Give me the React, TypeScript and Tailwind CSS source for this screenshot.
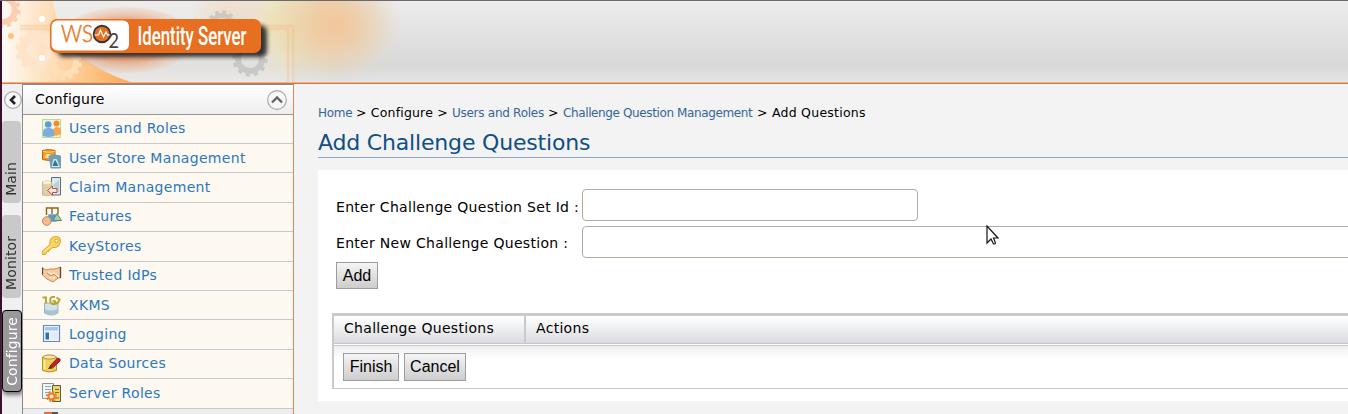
import React from "react";

const Gear = ({ x, y, r, color, hole }: { x: number; y: number; r: number; color: string; hole: number }) => (
  <g transform={`translate(${x} ${y})`} stroke={color} fill="none">
    <circle r={(r + hole) / 2} strokeWidth={r - hole} />
    <circle r={r + 1} strokeWidth="3.4" strokeDasharray={`${((r + 1) * 6.2832) / 24} ${((r + 1) * 6.2832) / 24}`} />
  </g>
);

function Banner() {
  return (
    <svg className="block h-[81px] w-full" width="1348" height="81" viewBox="0 1 1348 81" preserveAspectRatio="xMinYMin slice">
      <defs>
        <linearGradient id="bg" x1="0" y1="0" x2="0" y2="1">
          <stop offset="0" stopColor="#ececec" />
          <stop offset=".8" stopColor="#d8d8d8" />
          <stop offset="1" stopColor="#e4e4e4" />
        </linearGradient>
        <linearGradient id="swoosh" x1="0" y1="0" x2="1" y2="0">
          <stop offset="0" stopColor="#fffaf4" />
          <stop offset=".35" stopColor="#fde0bd" />
          <stop offset="1" stopColor="#fda94f" />
        </linearGradient>
        <radialGradient id="halo">
          <stop offset="0" stopColor="#e06b30" stopOpacity=".85" />
          <stop offset=".65" stopColor="#e88957" stopOpacity=".6" />
          <stop offset="1" stopColor="#f0c8b0" stopOpacity=".3" />
        </radialGradient>
        <radialGradient id="peach">
          <stop offset="0" stopColor="#f2c69b" />
          <stop offset=".35" stopColor="#efcaa2" stopOpacity=".85" />
          <stop offset=".7" stopColor="#e9d4b8" stopOpacity=".6" />
          <stop offset="1" stopColor="#e4ddd2" stopOpacity="0" />
        </radialGradient>
        <radialGradient id="yellow">
          <stop offset="0" stopColor="#f2dfa0" />
          <stop offset=".4" stopColor="#efdfae" stopOpacity=".85" />
          <stop offset="1" stopColor="#ebe3d2" stopOpacity="0" />
        </radialGradient>
        <filter id="soft" x="-10%" y="-30%" width="120%" height="170%">
          <feGaussianBlur stdDeviation="2.2" />
        </filter>
      </defs>
      <rect y="1" width="1348" height="81" fill="url(#bg)" />
      <rect x="2" y="1" width="292" height="81" fill="#f4f1ec" opacity=".35" />
      <circle cx="298" cy="24" r="64" fill="url(#yellow)" />
      <ellipse cx="336" cy="25" rx="66" ry="60" fill="url(#peach)" />
      <circle cx="230" cy="12" r="42" fill="url(#peach)" opacity=".35" />
      <path d="M2 1H53Q61 60 131 82H2Z" fill="url(#swoosh)" />
      <ellipse cx="126" cy="40" rx="68" ry="33" fill="url(#halo)" />
      <Gear x={3} y={10} r={15} hole={9} color="#fbceb0" />
      <Gear x={36} y={50} r={18} hole={9} color="#fde4cb" />
      <Gear x={65} y={63} r={14} hole={8} color="#ffdfb8" />
      <Gear x={222} y={26} r={13} hole={8} color="#d0c8be" />
      <Gear x={250} y={59} r={15} hole={9} color="#c8c8c8" />
      <path d="M20 26H293V82M20 29H288V82" fill="none" stroke="#f3ba82" strokeWidth="2.5" opacity=".35" />
      <g fill="#fff"><circle cx="42" cy="19" r="3" /><circle cx="42" cy="58" r="3" /></g>
      <circle cx="11" cy="36" r="3" fill="#fdc37d" />
      <rect x="57" y="25" width="210" height="32" rx="7" fill="#222" opacity=".9" filter="url(#soft)" />
      <rect x="50" y="19" width="211" height="34" rx="7" fill="#e96f20" />
      <rect x="51.5" y="20.5" width="77.5" height="30" rx="6" fill="#fff" />
      <text x="61" y="42" fontFamily="Lato" fontWeight="300" fontSize="22.5" fill="#e87722" stroke="#e87722" strokeWidth=".5" textLength="32" lengthAdjust="spacingAndGlyphs">WS</text>
      <circle cx="102" cy="34" r="8.3" fill="#e96f20" stroke="#383435" strokeWidth="1.9" />
      <path d="M94.5 35h4l2-5 3 7 2.5-5 1.5 3h2.5" fill="none" stroke="#fff" strokeWidth="1.2" />
      <text x="108.5" y="47.5" fontFamily="Lato" fontWeight="400" fontSize="21" fill="#454142" textLength="10.5" lengthAdjust="spacingAndGlyphs">2</text>
      <text x="137.5" y="45" fontFamily="Roboto" fontWeight="500" fontSize="25" fill="#fff" textLength="109" lengthAdjust="spacingAndGlyphs">Identity Server</text>
    </svg>
  );
}

const icons: Record<string, React.ReactNode> = {
  users: (
    <>
      <path d="M.5 .5h18v18H.5z" fill="#edf5df" stroke="#b5dd8d" />
      <circle cx="6.2" cy="5.5" r="3.3" fill="#5b9bdc" /><circle cx="14.5" cy="4.5" r="3" fill="#f28c28" />
      <path d="M11 18V11q1-3 4-3t4 3v4q-3 2-8 2" fill="#f6a550" />
      <path d="M1 17v-4q0-4 5.5-4t5.5 4v4q-5 2-11 0" fill="#7facdf" />
    </>
  ),
  store: (
    <>
      <path d="M.5 1.500q6-2 12.500 0v9q-6 2-12.500 0z" fill="#f29a20" stroke="#bd6b18" /><path d="M1 2.500q6 1.500 11.500 0" stroke="#ffd88a" fill="none" />
      <path d="m2.500 9 1.500-4h4l1 4z" fill="#ffdf9b" />
      <path d="M7 7q6-2 11.500 0v12H9z" fill="#6d9fb7" stroke="#6d9fb7" /><path d="m9.500 18 2-8h3l3.500 8z" fill="#d9ebf2" /><path d="m10.500 17 2.500-6.500 3.500 6.500z" fill="#35768f" />
    </>
  ),
  claim: (
    <>
      <path d="M9.500 .5h9v17.500h-9z" fill="#dceaf0" stroke="#55727d" /><path d="m11 8 6-5v13z" fill="#bdced5" />
      <path d="M.5 5q5-2.500 9 0v13q-5 1.500-9 0z" fill="#ddd0a5" stroke="#c9bc92" /><ellipse cx="5" cy="5.500" rx="4" ry="1.800" fill="#f6efd2" />
      <path d="m5.500 13.500 5-4.500v2.500h4.500v4h-4.500V18z" fill="#f8e5de" stroke="#b64e43" />
    </>
  ),
  features: (
    <>
      <path d="M4.500 8V1h11.500v6M10 1v6" fill="none" stroke="#8b6420" strokeWidth="1.400" />
      <path d="M6.500 7.500h8v7h-8z" fill="#5b96cf" stroke="#87b5dd" /><path d="m11 13.500 4-7 4.500 7z" fill="#a5cf9f" stroke="#5c8971" />
      <circle cx="4.800" cy="14" r="4.300" fill="#f5bd8c" stroke="#b98862" />
    </>
  ),
  key: (
    <>
      <path d="M.5 15 8 8.500Q7 4 10 1.500q4-2.500 7.500 0 2.500 4-.5 8-3 3-6.500 2l-2 2H7v2H5l-1.500 3h-3z" fill="#fbd35c" stroke="#d8a735" />
      <circle cx="14.500" cy="4.800" r="1.700" fill="#fff9db" stroke="#cf9c31" /><path d="m3 15.500 6-6" stroke="#fff0a0" />
    </>
  ),
  trust: (
    <>
      <path d="M.5 2 4 4l4-1h5l5.500-2v11h-2.500l-5 4-6-3-4.500-4z" fill="#f3cda0" stroke="#c78851" />
      <path d="M.5 1.500v7M18.500 1v11" stroke="#673e36" strokeWidth="1.300" /><path d="m6 6 3 2 3-1 5 4M8 12l2-2M11 13l2-2" stroke="#fff0d9" fill="none" strokeWidth="1.200" /><path d="m5 7 4 3 3-2 4 4" stroke="#c08050" fill="none" />
    </>
  ),
  xkms: (
    <>
      <path d="M2.500 7h13.500v10q-6.500 4-13.500 0z" fill="#d3e1e9" stroke="#9bb4c2" /><path d="M3 13q6 3 12.500 0v4q-6 3-12.500 0z" fill="#a8c3d2" />
      <path d="M.5 1.500h3.500v6M13 1q-6-1-4.500 5 1 3 4 1.500 2-3-2-2.500m1 3q5 0 6-4.500l-3-2" fill="none" stroke="#b7a52b" strokeWidth="1.900" />
    </>
  ),
  log: (
    <>
      <path d="M1.500 1.500h16v16h-16z" fill="#eef6fc" stroke="#6688bb" strokeWidth="1.200" /><path d="M3 3h13v3.500H3z" fill="#9fc8f2" />
      <path d="M3.500 8.500H7v7H3.500z" fill="#2e70b4" /><path d="M8.500 8.500H16v7H8.500z" fill="#dfebf6" />
    </>
  ),
  data: (
    <>
      <path d="M.5 3q7-3.500 14 0v13.500q-7 3-14 0z" fill="#f3ce59" stroke="#b3912b" /><ellipse cx="7.500" cy="3" rx="6.500" ry="2" fill="#fae9b8" stroke="#b79332" />
      <path d="M2.500 6v9" stroke="#fff0a0" strokeWidth="1.500" /><path d="m8 12 7.500-8 2.500 1v2l-7.500 7z" fill="#c52027" stroke="#832329" /><path d="m6 15 2-3 2.500 2.500z" fill="#382e28" />
    </>
  ),
  roles: (
    <>
      <path d="M.5 .5h11v15H.5z" fill="#eff4f4" stroke="#829aa0" /><path d="M3 3.500h6M3 6.500h6M3 9.500h5" stroke="#8fa9ae" />
      <path d="M10.500 2.500h8v16h-8z" fill="#ead66d" stroke="#5f5d3e" /><path d="M13 6.500h4M13 9.500h4M13 15h4" stroke="#786e2e" />
      <circle cx="9.500" cy="13.500" r="3" fill="#fff0df" stroke="#f17920" strokeWidth="1.800" /><circle cx="9.500" cy="13.500" r="4.700" fill="none" stroke="#f17920" strokeWidth="1.800" strokeDasharray="2 1.690" />
    </>
  ),
};

const rows: [string, string, string][] = [
  ["Users and Roles", "users", "h-[29px] pb-px"],
  ["User Store Management", "store", "h-[29px] pt-px"],
  ["Claim Management", "claim", "h-[30px] pb-px"],
  ["Features", "features", "h-[29px] pb-px"],
  ["KeyStores", "key", "h-[30px] pb-px"],
  ["Trusted IdPs", "trust", "h-[29px] pb-px"],
  ["XKMS", "xkms", "h-[29px] pt-px"],
  ["Logging", "log", "h-[30px] pb-px"],
  ["Data Sources", "data", "h-[29px] pb-px"],
  ["Server Roles", "roles", "h-[30px] pb-px"],
];

const verticalText = "rotate-180 [writing-mode:vertical-rl] text-[14px] tracking-[.1px] leading-[16px] whitespace-nowrap";
const button = "border border-[#9d9d9d] bg-linear-to-b from-[#f5f5f5] to-[#cdcdcd] font-['Liberation_Sans',sans-serif] text-[16px] leading-none tracking-normal text-black";

export default function App() {
  return (
    <div className="flex h-[414px] w-full flex-col overflow-hidden bg-[#f3f3f3] font-['DejaVu_Sans',sans-serif] text-black">
      <div className="h-px shrink-0 bg-[#6d686b]" />
      <div className="h-[83px] shrink-0 border-l-2 border-[#3d0e2c]">
        <div className="h-[81px] overflow-hidden"><div className="-ml-0.5 w-[1348px]"><Banner /></div></div>
        <div className="h-px bg-[#e5b493]" />
        <div className="h-px bg-[#dc7639]" />
      </div>
      <div className="flex min-h-0 flex-1">
        <aside className="flex w-[22px] shrink-0 flex-col border-l-2 border-[#3d0e2c] bg-[#f0f0f0]">
          <div className="flex h-[37px] justify-center pt-[7px] pl-[2px]">
            <svg width="18" height="18" viewBox="0 0 18 18" className="shrink-0">
              <circle cx="9" cy="9" r="8.3" fill="#f7f7f7" stroke="#aaa" strokeWidth="1.2" /><path d="m11 5-4 4 4 4" fill="none" stroke="#222" strokeWidth="2.6" />
            </svg>
          </div>
          <div className="flex h-[82px] w-[19px] items-end justify-center rounded bg-[#c9c9c9] pr-px pb-[7px] text-[#333]"><span className={verticalText}>Main</span></div>
          <div className="mt-3 flex h-[83px] w-[19px] items-end justify-center rounded bg-[#c9c9c9] pr-px pb-[8px] text-[#333]"><span className={verticalText}>Monitor</span></div>
          <div className="mt-3 flex h-[82px] w-5 items-end justify-center rounded border border-black bg-[#999] pb-[5px] text-white shadow-[1px_3px_4px_#777]"><span className={verticalText}>Configure</span></div>
        </aside>
        <nav className="w-[272px] shrink-0 border-r border-l border-r-[#e18656] border-l-[#888] bg-[#eee]">
          <div className="flex h-[31px] items-center justify-between border-t border-b border-t-[#888] border-b-[#999] bg-linear-to-b from-white to-[#eee] pr-[6px] pl-3 text-[14px] tracking-[.2px]">
            <span>Configure</span>
            <svg width="20" height="20" viewBox="0 0 20 20"><circle cx="10" cy="10" r="9.3" fill="#f8f8f8" stroke="#aaa" strokeWidth="1.2" /><path d="m5 12.500 5-5 5 5" fill="none" stroke="#666" strokeWidth="2.400" /></svg>
          </div>
          {rows.map(([label, icon, layout]) => (
            <div key={label} className={`${layout} flex items-center gap-[7px] border-b border-[#c5c8cc] bg-[#fdf8f0] pl-[19px] text-[14px] tracking-[.32px] text-[#2b78bd]`}>
              <svg width="20" height="20" viewBox="0 0 20 20" className="shrink-0">{icons[icon]}</svg>
              <span>{label}</span>
            </div>
          ))}
          <svg className="mt-[3px] ml-5" width="20" height="8" viewBox="0 0 20 8"><path d="M1 0h14v8H1z" fill="#e56d46" /><path d="M9 0h6v3H9z" fill="#555" /></svg>
        </nav>
        <main className="min-w-0 flex-1 pl-6">
          <div className="mt-5 flex h-[18px] items-center gap-[4px] text-[12px] tracking-[-.38px] whitespace-nowrap text-[#336699]">
            <span className="w-[34px] tracking-[-.25px]">Home</span><span className="w-[92px] text-[12.5px] tracking-[.18px] text-black">&gt; Configure &gt;</span><span className="w-[92px] tracking-[-.27px]">Users and Roles</span><span className="w-[11px] text-[12.5px] text-black">&gt;</span><span className="w-[190px]">Challenge Question Management</span><span className="text-[12.5px] tracking-[.25px] text-black">&gt; Add Questions</span>
          </div>
          <h1 className="h-[36px] border-b border-[#90a8c8] pt-[7px] text-[22px] leading-[27px] tracking-[-.18px] text-[#0f4f83]">Add Challenge Questions</h1>
          <section className="mt-3 h-[231px] overflow-hidden bg-white pt-[19px] pl-[14px] text-[14px] tracking-[.3px]">
            <div className="flex h-8 pl-1">
              <label className="w-[246px] shrink-0 pt-[9px] leading-[18px] whitespace-nowrap">Enter Challenge Question Set Id :</label>
              <div className="w-[336px] rounded border border-[#b5aaa0] bg-white" />
            </div>
            <div className="mt-[5px] flex h-8 pl-1">
              <label className="w-[246px] shrink-0 pt-[8px] leading-[18px] whitespace-nowrap">Enter New Challenge Question :</label>
              <div className="relative w-[900px] shrink-0 rounded border border-[#b5aaa0] bg-white">
                <svg className="absolute -top-[2px] left-[403px]" width="14" height="22" viewBox="0 0 14 22"><path d="M1 1v17l4-4 2.500 5q2 0 2-1l-2-5h4.500z" fill="#fff" stroke="#111" strokeWidth="1.2" /></svg>
              </div>
            </div>
            <button className={`${button} mt-1 ml-1 block h-[27px] w-[42px]`}>Add</button>
            <div className="mt-6 w-[1100px] border-t-[3px] border-b border-l-2 border-[#cacaca]">
              <div className="flex h-7 border-b border-[#c7c7c7] bg-linear-to-b from-white to-[#dadcdf] leading-[24px]">
                <div className="w-[192px] border-r-2 border-[#cacaca] pl-[10px]">Challenge Questions</div><div className="pl-[10px]">Actions</div>
              </div>
              <div className="mt-px h-[43px] border-t border-[#c7c7c7] bg-linear-to-b from-[#eee] to-white to-[12px] pt-[7px] pl-[9px]">
                <div className="flex gap-[5px]"><button className={`${button} h-7 w-[56px]`}>Finish</button><button className={`${button} h-7 w-[62px]`}>Cancel</button></div>
              </div>
            </div>
          </section>
        </main>
      </div>
    </div>
  );
}
